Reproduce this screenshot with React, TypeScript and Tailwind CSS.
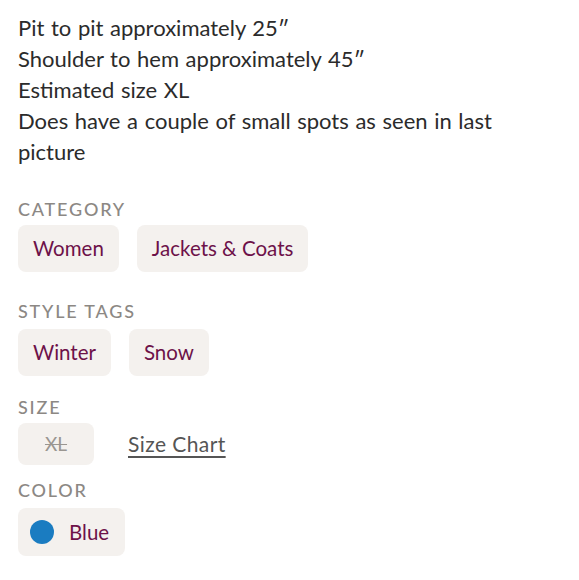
const FONT = { fontFamily: 'Lato, "Noto Sans", sans-serif' }

function Label({ children, className = '' }: { children: React.ReactNode; className?: string }) {
  return (
    <div className={`text-[18px] leading-6 font-medium uppercase tracking-[0.1em] text-[#8c8884] ${className}`}>
      {children}
    </div>
  )
}

function Chip({ children }: { children: React.ReactNode }) {
  return (
    <span className="inline-flex h-[47px] items-center rounded-lg bg-[#f4f1ee] px-[15px] text-[20.5px] text-[#6d1249]">
      {children}
    </span>
  )
}

export default function App() {
  return (
    <div style={FONT} className="min-h-[580px] border-b border-[#eeeeee] bg-white px-[18px] pt-3 pb-6">
      <div className="max-w-[510px] text-[22px] leading-[31px] text-[#2b2b2b] [word-spacing:1px]">
        <p>Pit to pit approximately 25″</p>
        <p>Shoulder to hem approximately 45″</p>
        <p>Estimated size XL</p>
        <p>Does have a couple of small spots as seen in last picture</p>
      </div>

      <Label className="mt-[30px]">Category</Label>
      <div className="mt-[4px] flex gap-[18px]">
        <Chip>Women</Chip>
        <Chip>Jackets &amp; Coats</Chip>
      </div>

      <Label className="mt-[27px]">Style Tags</Label>
      <div className="mt-[6px] flex gap-[18px]">
        <Chip>Winter</Chip>
        <Chip>Snow</Chip>
      </div>

      <Label className="mt-[19px]">Size</Label>
      <div className="mt-[4px] flex items-center gap-[34px]">
        <span className="inline-flex h-[42px] w-[76px] items-center justify-center rounded-lg bg-[#f4f1ee] text-[19px] text-[#9a9691] line-through">
          XL
        </span>
        <a className="text-[21px] tracking-[0.02em] text-[#555555] underline underline-offset-4">Size Chart</a>
      </div>

      <Label className="mt-[13px]">Color</Label>
      <div className="mt-[6px] flex">
        <span className="inline-flex h-[48px] items-center gap-[15px] rounded-lg bg-[#f4f1ee] pl-3 pr-4 text-[20.5px] text-[#6d1249]">
          <span className="h-6 w-6 rounded-full bg-[#1a7cc1]" />
          Blue
        </span>
      </div>
    </div>
  )
}
